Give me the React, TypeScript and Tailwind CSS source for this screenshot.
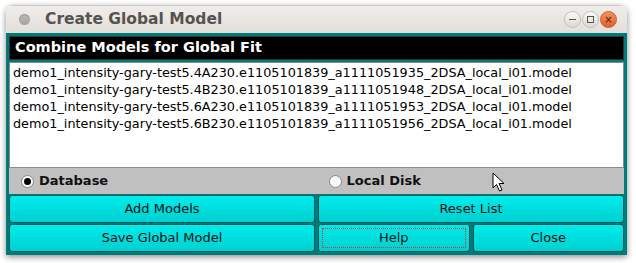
import React from "react";

const MODELS = [
  "demo1_intensity-gary-test5.4A230.e1105101839_a1111051935_2DSA_local_i01.model",
  "demo1_intensity-gary-test5.4B230.e1105101839_a1111051948_2DSA_local_i01.model",
  "demo1_intensity-gary-test5.6A230.e1105101839_a1111051953_2DSA_local_i01.model",
  "demo1_intensity-gary-test5.6B230.e1105101839_a1111051956_2DSA_local_i01.model",
];

const font = { fontFamily: '"DejaVu Sans", "Liberation Sans", sans-serif' };

function Btn({ label, focus }: { label: string; focus?: boolean }) {
  return (
    <button className="relative h-[28px] rounded-[3px] border border-[#005a5a] bg-gradient-to-b from-[#00ecec] to-[#00d0d0] text-[13px] text-[#111]">
      {focus && <span className="absolute inset-[3px] border border-dotted border-[#e03030]" />}
      {label}
    </button>
  );
}

function Radio({ label, checked }: { label: string; checked?: boolean }) {
  return (
    <div className="flex items-center gap-[5px] pl-[12px]">
      <span className="flex h-[13px] w-[13px] items-center justify-center rounded-full border border-[#8a8a8a] bg-gradient-to-b from-[#f4f4f4] to-white">
        {checked && <span className="h-[7px] w-[7px] rounded-full bg-black" />}
      </span>
      <span className="text-[13px] font-bold text-[#111]">{label}</span>
    </div>
  );
}

export default function App() {
  return (
    <div className="relative h-[263px] w-[636px] overflow-hidden bg-white pl-[6px] pt-[5px]" style={font}>
      <div className="w-[621px] overflow-hidden rounded-t-[7px] shadow-[0_2px_6px_rgba(0,0,0,0.45)]">
        <div className="flex h-[28px] items-center border-t border-[#cfcac4] bg-gradient-to-b from-[#efedea] to-[#e3dfdb] pl-[13px] pr-[10px]">
          <span className="h-[11px] w-[11px] rounded-full bg-gradient-to-b from-[#bdbab6] to-[#a7a4a0] shadow-[inset_0_1px_1px_rgba(0,0,0,0.2)]" />
          <span className="ml-[15px] text-[15.5px] font-bold text-[#555350]">Create Global Model</span>
          <div className="ml-auto flex items-center gap-[1px]">
            <span className="flex h-[17px] w-[17px] items-center justify-center rounded-full border border-[#c2beb9] bg-gradient-to-b from-[#fbfaf9] to-[#dcd8d3]">
              <span className="h-[1px] w-[7px] bg-[#555]" />
            </span>
            <span className="flex h-[17px] w-[17px] items-center justify-center rounded-full border border-[#c2beb9] bg-gradient-to-b from-[#fbfaf9] to-[#dcd8d3]">
              <span className="h-[7px] w-[7px] border border-[#555]" />
            </span>
            <span className="flex h-[17px] w-[17px] items-center justify-center rounded-full border border-[#c8602c] bg-gradient-to-b from-[#f5905a] to-[#e0622c] text-[10px] leading-none text-[#4a2010]">
              ×
            </span>
          </div>
        </div>
        <div className="flex flex-col bg-[#007b7b] p-[3px]">
          <div className="flex h-[24px] items-center border border-[#333] bg-black px-[5px] text-[14.5px] font-bold text-white">
            Combine Models for Global Fit
          </div>
          <div className="mt-[2px] h-[106px] border border-[#8a8a8a] bg-white px-[3px] pt-[1px] text-[12.8px] leading-[17px] text-black">
            {MODELS.map((m) => (
              <div key={m}>{m}</div>
            ))}
          </div>
          <div className="grid h-[26px] grid-cols-2 items-center bg-[#c0c0c0]">
            <Radio label="Database" checked />
            <Radio label="Local Disk" />
          </div>
          <div className="mt-[1px] grid grid-cols-2 gap-x-[3px] gap-y-[1px]">
            <Btn label="Add Models" />
            <Btn label="Reset List" />
            <Btn label="Save Global Model" />
            <div className="grid grid-cols-2 gap-[3px]">
              <Btn label="Help" focus />
              <Btn label="Close" />
            </div>
          </div>
        </div>
      </div>
      <svg className="absolute left-[492px] top-[172px]" width="14" height="20" viewBox="0 0 14 20">
        <path d="M1 1 L1 16 L4.5 12.5 L7.5 19 L10 18 L7 11.5 L12 11.5 Z" fill="white" stroke="black" strokeWidth="1" strokeLinejoin="round" />
      </svg>
    </div>
  );
}
